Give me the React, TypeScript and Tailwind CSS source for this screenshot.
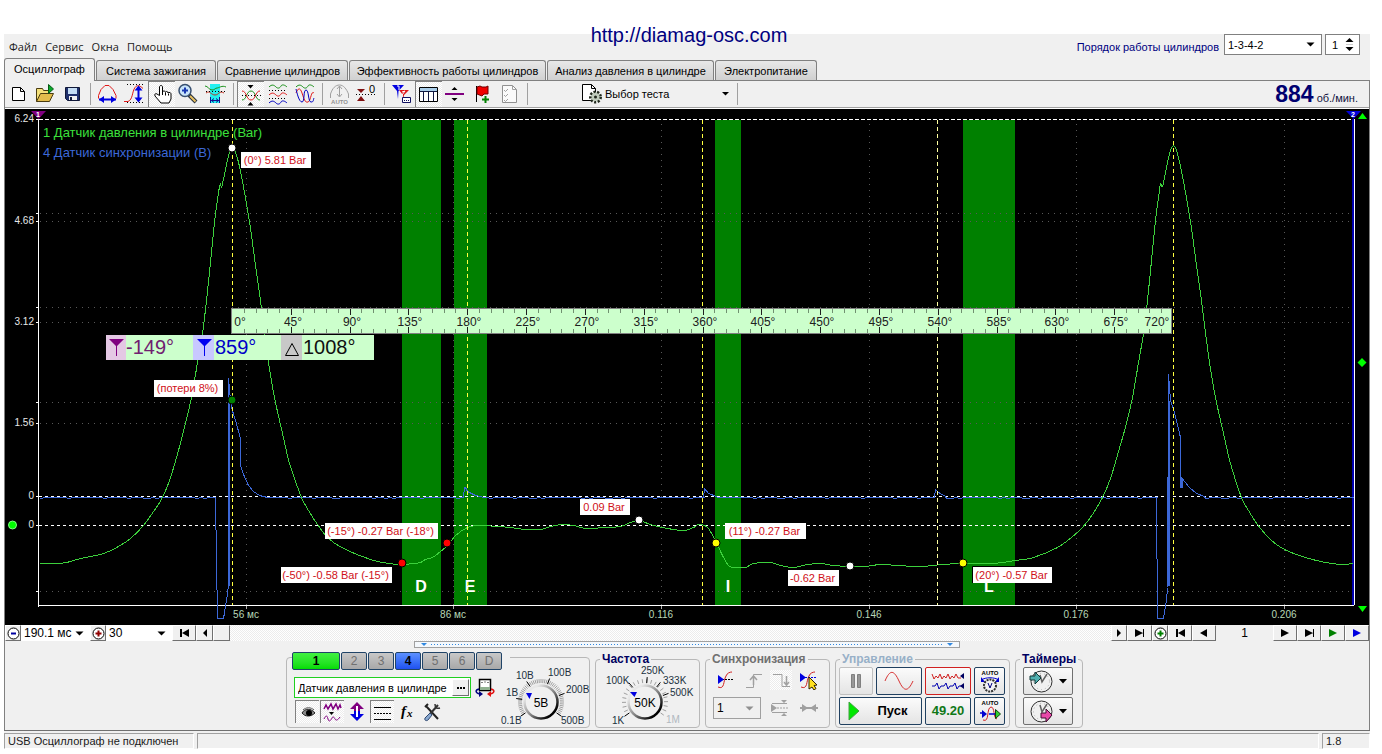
import React from "react";

type Kids = { children?: React.ReactNode };

const DITHER =
  "bg-[repeating-conic-gradient(#ffffff_0_25%,#ececec_0_50%)] bg-[length:2px_2px]";

/* ---------- small shared pieces ---------- */

function Icon({ w, h, children }: Kids & { w: number; h: number }) {
  return (
    <svg width={w} height={h} viewBox={`0 0 ${w} ${h}`} fill="none" className="block shrink-0" aria-hidden="true">
      {children}
    </svg>
  );
}

function Tool({ label, pressed, children }: Kids & { label: string; pressed?: boolean }) {
  return (
    <button
      aria-label={label}
      className={
        "h-[26px] w-[27px] shrink-0 " +
        (pressed ? "shadow-[inset_1px_1px_0_#808080] " + DITHER : "")
      }
    >
      <Icon w={27} h={26}>{children}</Icon>
    </button>
  );
}

function Sep() {
  return (
    <span className="flex h-[26px] w-2 shrink-0 items-center justify-center">
      <span className="h-[22px] w-px bg-[#a0a0a0]" />
    </span>
  );
}

function Combo({ label, value, box, arrow }: { label: string; value: string; box: string; arrow: string }) {
  return (
    <span className={"relative flex shrink-0 items-center " + box}>
      <select aria-label={label} defaultValue={value} className="h-full w-full appearance-none bg-transparent pl-[3px] text-[12px] leading-4 outline-none">
        <option>{value}</option>
      </select>
      <svg width="9" height="5" viewBox="0 0 9 5" className={"pointer-events-none absolute right-1.5 " + arrow} aria-hidden="true">
        <path d="M0.500 0.500H8.500L4.500 4.500Z" fill="currentColor" />
      </svg>
    </span>
  );
}

/* ---------- header ---------- */

function Header() {
  return (
    <header className="flex h-[25px] items-center justify-between bg-[#f0f0f0] pl-[5px] pr-[10px]">
      <nav className="flex gap-2 font-['Open_Sans','Liberation_Sans',sans-serif] text-[11px] leading-4 text-[#1a1a1a]">
        <button>Файл</button>
        <button>Сервис</button>
        <button>Окна</button>
        <button>Помощь</button>
      </nav>
      <div className="flex items-center gap-[3px]">
        <label htmlFor="order" className="mr-0.5 text-[11px] leading-4 text-[#000080]">Порядок работы цилиндров</label>
        <span className="relative -mt-1 flex h-[21px] w-[98px] items-center border border-[#808080] bg-white">
          <select id="order" defaultValue="1-3-4-2" className="h-full w-full appearance-none bg-transparent pl-[3px] text-[11px] leading-4 outline-none">
            <option>1-3-4-2</option>
          </select>
          <svg width="9" height="5" viewBox="0 0 9 5" className="pointer-events-none absolute right-1.5" aria-hidden="true">
            <path d="M0.500 0.500H8.500L4.500 4.500Z" fill="#000" />
          </svg>
        </span>
        <span className="-mt-1 flex h-[21px] w-[35px] items-center border border-[#808080] bg-white">
          <input aria-label="Цилиндр" defaultValue="1" className="w-[18px] bg-transparent pl-1.5 text-[11px] leading-4 outline-none" />
          <button aria-label="Изменить цилиндр">
            <Icon w={11} h={15}>
              <path d="M5.500 1L9.500 5H1.500ZM5.500 14L1.500 10H9.500Z" fill="#000" />
              <path d="M2 7.500H9" stroke="#ccc" />
            </Icon>
          </button>
        </span>
      </div>
    </header>
  );
}

const tabs = [
  { t: "Система зажигания", w: "w-[120px]" },
  { t: "Сравнение цилиндров", w: "w-[131px]" },
  { t: "Эффективность работы цилиндров", w: "w-[197px]" },
  { t: "Анализ давления в цилиндре", w: "w-[167px]" },
  { t: "Электропитание", w: "w-[102px]" },
];

function Tabs() {
  return (
    <div role="tablist" className="flex h-[21px] items-end gap-px bg-[#f0f0f0] text-[11px] leading-4">
      <button role="tab" aria-selected="true" className="-mb-px h-[23px] w-[91px] shrink-0 rounded-t-[3px] border border-b-0 border-[#808080] bg-[#f0f0f0] pb-0.5">
        Осциллограф
      </button>
      {tabs.map((x) => (
        <button
          key={x.t}
          role="tab"
          aria-selected="false"
          className={"h-5 shrink-0 whitespace-nowrap rounded-t-[3px] border border-b-0 border-[#808080] bg-linear-to-b from-[#e8e8e8] to-[#d0d0d0] " + x.w}
        >
          {x.t}
        </button>
      ))}
    </div>
  );
}

/* ---------- toolbar ---------- */

function Toolbar() {
  return (
    <div className="flex h-[29px] items-start border-t border-[#808080] bg-[#f0f0f0] shadow-[inset_0_-1px_0_#fff,inset_0_-2px_0_#a0a0a0]">
      <Tool label="Новый">
        <path d="M7.500 6.500h8l4 4v9h-12z M15.500 6.500v4h4" fill="#fff" stroke="#000" />
      </Tool>
      <Tool label="Открыть">
        <path d="M4.500 20.500v-13h6l1 2h6v3" fill="#f4e07a" stroke="#4a3c10" />
        <path d="M4.500 20.500l4-8h13l-4 8z" fill="#e2bc4c" stroke="#4a3c10" />
        <path d="M16.500 3.500v9l5-4.500z" fill="#0aa82c" stroke="#045a14" />
      </Tool>
      <Tool label="Сохранить">
        <path d="M6.500 6.500h14v13h-12l-2-2z" fill="#20306c" stroke="#101838" />
        <path d="M9 7h9v6H9z" fill="#c4dcf4" />
        <path d="M10 15h8v4h-8z" fill="#f0f0f0" />
        <path d="M11 16h2v3h-2z" fill="#101838" />
      </Tool>
      <Sep />
      <Tool label="Ширина">
        <path d="M4.500 17.500v-3L7 8.500 11 4.500h4L19 8.500l3 6v3" stroke="#e01818" />
        <path d="M5 18.500H22" stroke="#0000e0" strokeWidth="2" />
        <path d="M10 15v7l-5-3.500zM17 15v7l5-3.500z" fill="#0000e0" />
      </Tool>
      <Tool label="Высота">
        <path d="M6 3.500H22M6 21.500H22" stroke="#000" strokeDasharray="1 2" />
        <path d="M3 20.500h4c5-2 4-10 7-14 2-3 5-2 8 1" stroke="#e01818" />
        <path d="M17.500 7V19" stroke="#0000e0" strokeWidth="2" />
        <path d="M17.500 4.500l4 5h-8zM17.500 21.500l4-5h-8z" fill="#0000e0" />
      </Tool>
      <Tool label="Рука" pressed>
        <path d="M11.500 14.500V6c0-2 3-2 3 0v5.500c0-2 3-2 3 0 0-1.500 2.500-1.500 2.500.5 0-1 3-1 3 1v5l-2 4h-8l-6-7c-1-2 1-3 2-2z" fill="#fff" stroke="#000" />
        <path d="M14.500 11v3M17.500 12v2.500M20.500 12.500v2" stroke="#000" />
      </Tool>
      <Tool label="Масштаб">
        <path d="M14 14l7 7" stroke="#26303c" strokeWidth="4" />
        <path d="M15 15l5.500 5.500" stroke="#e8c060" strokeWidth="2" />
        <circle cx="10" cy="9.500" r="6" fill="#c8e4fa" stroke="#385070" strokeWidth="1.500" />
        <path d="M7 9.500h6M10 6.500v6" stroke="#1838b0" strokeWidth="2" />
      </Tool>
      <Tool label="Диапазон">
        <path d="M8 3h10v19H8z" fill="#20f0f0" />
        <path d="M3 5c3 0 4 4 7 4s3-2 5-2 5-3 9-1" stroke="#189018" />
        <path d="M4 12c4-3 5 2 9 2s4-5 9-2" stroke="#c03020" />
        <path d="M4 10.500h20" stroke="#000" strokeDasharray="1 2" />
        <path d="M8.500 16v6M17.500 16v6M9 19.500h8M12 17.500l-2.500 2 2.500 2M14 17.500l2.500 2-2.500 2" stroke="#101090" />
      </Tool>
      <Sep />
      <Tool label="Сигналы" pressed>
        <path d="M5 19c5 0 4-9 9-9s4 9 9 9" stroke="#189018" />
        <path d="M5 10c5 0 4 9 9 9s4-9 9-9" stroke="#e01818" />
        <path d="M5 14.500h19" stroke="#000" strokeDasharray="1 2" />
        <path d="M10.500 4h6l-3 3.500zM10.500 24.500h6l-3-3.500z" fill="#000" />
      </Tool>
      <Tool label="Раздельно">
        <path d="M5 6c3-3 5-2 7 0s4 1 5-1 4-1 6 1" stroke="#189018" />
        <path d="M5 14c3-3 5-2 7 0s4 1 5-1 4-1 6 1" stroke="#e01818" />
        <path d="M5 22c3-3 5-2 7 0s4 1 5-1 4-1 6 1" stroke="#0000c0" />
        <path d="M5 9.500h18M5 17.500h18" stroke="#000" strokeDasharray="1 2" />
      </Tool>
      <Tool label="Наложение">
        <path d="M5 6c3-3 5-2 7 0s4 1 5-1 4-1 6 1" stroke="#189018" />
        <path d="M5 12c2-5 4-6 6 0s3 10 6 9 3-12 6-9" stroke="#e01818" />
        <path d="M5 8c1 4 3 13 6 13s1-12 4-12 2 12 5 12 2-2 3-4" stroke="#0000c0" />
      </Tool>
      <Sep />
      <Tool label="Авто">
        <path d="M4.500 17v-4c2-6 5-9 9-9s7 4 9 9v4" stroke="#a0a0a0" />
        <path d="M13.500 5v10M11 8l2.500-3L16 8M11 13l2.500 3 2.500-3" stroke="#a0a0a0" />
        <text x="13.500" y="23" textAnchor="middle" fontSize="6" fontWeight="bold" fill="#909090">AUTO</text>
      </Tool>
      <Tool label="Ноль">
        <path d="M3 13.500h19" stroke="#000" strokeDasharray="1 2" />
        <path d="M4 8h8L8 12zM4 20h8l-4-5z" fill="#801010" />
        <text x="16" y="12" fontSize="11" fill="#000">0</text>
      </Tool>
      <Sep />
      <Tool label="Маркеры">
        <path d="M4 4h12l-5.500 6-.5 8-1-8z" fill="#0000e0" />
        <path d="M11 9h10l-5 5v8l-1-8z" fill="#e01818" />
        <path d="M9 5h2v4M14 11l3-1-3 4" stroke="#fff" />
        <path d="M14.500 16.500h8v5h-8z" fill="#fff" stroke="#101060" />
        <path d="M16 19.500h5" stroke="#101060" strokeDasharray="1 1" />
      </Tool>
      <Tool label="Таблица" pressed>
        <path d="M4.500 6.500h18v14h-18z" fill="#fff" stroke="#000" />
        <path d="M5 7h17v3H5z" fill="#a8cce8" />
        <path d="M5 10.500h17M8.500 10v10M13.500 10v10M18.500 10v10" stroke="#101840" />
      </Tool>
      <Tool label="Линия">
        <path d="M3 13h19" stroke="#800080" strokeWidth="2" />
        <path d="M9.500 9h6l-3-3zM9.500 17h6l-3 3z" fill="#000" />
      </Tool>
      <Tool label="Флаг">
        <path d="M7.500 5v16" stroke="#000" />
        <path d="M8 6l3-1 2 1h4l2-1v8h-4l-2 2-5-2z" fill="#f00000" stroke="#700000" />
        <path d="M16.500 15v7M13 18.500h7" stroke="#008000" strokeWidth="2" />
      </Tool>
      <Tool label="Отчёт">
        <path d="M6.500 4.500h10l4 4v13h-14z" fill="#fafafa" stroke="#909090" />
        <path d="M16.500 4.500v4h4M8 9l1.500 1.500L12 8M8 14l1.500 1.500L12 13M8 19l1.500 1.500L12 18" stroke="#a0a0a0" />
      </Tool>
      <Sep />
      <button className="ml-[50px] flex h-[26px] w-[152px] shrink-0 items-center gap-0.5 text-[11px] leading-4">
        <Icon w={22} h={22}>
          <path d="M1.500 1.500h9l4 4v12h-13z" fill="#fff" stroke="#000" />
          <path d="M10.500 1.500v4h4" stroke="#000" />
          <circle cx="14.500" cy="14" r="5" fill="#d0dccc" stroke="#20281c" strokeWidth="3" strokeDasharray="2 1.500" />
          <circle cx="14.500" cy="14" r="4" fill="#c0ccbc" />
          <circle cx="14.500" cy="14" r="1.500" fill="#20281c" />
        </Icon>
        <span className="grow text-left">Выбор теста</span>
        <Icon w={13} h={6}><path d="M2 1h7L5.500 4.500z" fill="#000" /></Icon>
      </button>
      <Sep />
      <p className="ml-auto flex items-baseline gap-[3px] pr-[11px]">
        <strong className="text-[23px] leading-[26px] text-[#000070]">884</strong>
        <span className="text-[11px] leading-4 text-[#101040]">об./мин.</span>
      </p>
    </div>
  );
}

/* ---------- oscillogram ---------- */

const pressure =
  "39,563 55,563 66,562 80,558 103,553 118,546 130,538 143,525 153,511 162,497 170,477 178,450 185,423 191,397 194,380 197,362 202,333 206,300 210,262 214,222 218,192 220,183 221,187 226,164 229,152 232,148 235,152 239,166 244,192 250,228 255,265 260,300 264,332 268,362 274,397 282,433 289,463 301,497 308,510 317,524 328,538 343,548 370,559 388,563 402,564 413,563 420,562 425,559 432,557 440,551 447,545 455,535 467,527 477,525 497,526 510,527 525,529 540,529 550,526 562,524 573,525 585,528 593,528 603,527 620,526 630,522 638,520 650,524 662,527 683,530 693,527 698,524 704,525 708,528 716,542 722,555 728,565 733,567 745,567 753,563 770,562 780,565 793,567 807,564 820,563 833,565 850,566 864,566 880,564 897,565 921,566 942,564 963,563 992,563 1015,560 1033,557 1057,547 1071,537 1082,527 1092,514 1102,497 1110,478 1118,451 1126,423 1132,397 1135,380 1138,362 1143,333 1147,300 1151,260 1155,220 1159,190 1160,183 1162,186 1167,162 1170,150 1173,145 1176,150 1180,166 1185,192 1191,228 1196,265 1201,300 1205,332 1209,362 1215,397 1223,433 1230,463 1241,497 1248,510 1257,524 1271,540 1284,549 1305,557 1325,562 1342,564 1353,563";

/* Catmull-Rom spline through the sampled points */
function smooth(points: string) {
  const p = points.split(" ").map((s) => s.split(",").map(Number));
  const r = (n: number) => Math.round(n * 10) / 10;
  let d = `M${p[0][0]} ${p[0][1]}`;
  for (let i = 0; i < p.length - 1; i++) {
    const a = p[Math.max(0, i - 1)];
    const b = p[i];
    const c = p[i + 1];
    const e = p[Math.min(p.length - 1, i + 2)];
    const dx = (c[0] - b[0]) / 3;
    const mb = (c[1] - a[1]) / (c[0] - a[0]);
    const mc = (e[1] - b[1]) / (e[0] - b[0]);
    d += `C${r(b[0] + dx)} ${r(b[1] + mb * dx)} ${r(c[0] - dx)} ${r(c[1] - mc * dx)} ${c[0]} ${c[1]}`;
  }
  return d;
}

const pressurePath = smooth(pressure);

function noise(x0: number, x1: number) {
  const out: string[] = [];
  let seed = x0;
  for (let x = x0; x < x1; x += 4) {
    seed = (seed * 73 + 41) % 101;
    const y = seed % 5 === 0 ? 498 : 497;
    out.push(`${x},${y}`, `${x + 3},${y}`);
  }
  return out.join(" ");
}

const sync = [
  noise(39, 214),
  "215,497 216,560 217,618 223,618 226,600 228,585 228,378 230,400 231,407 235,420 240,438 240,465 243,474 248,485 253,491 259,495 267,497",
  noise(268, 462),
  "463,497 464,487 465,487 467,491 475,495 484,497",
  noise(485, 702),
  "703,497 704,488 708,493 716,496",
  noise(717, 933),
  "934,497 935,489 938,492 945,496",
  noise(946, 1155),
  "1156,497 1157,618 1163,618 1166,600 1167,587 1168,374 1170,400 1174,412 1180,437 1180,487 1181,477 1184,481 1189,487 1196,493 1204,496",
  noise(1205, 1350),
  "1353,497",
].join(" ");

const tags = [
  { t: "(0°) 5.81 Bar", x: 241, y: 152, w: 70 },
  { t: "(потери 8%)", x: 154, y: 380, w: 69 },
  { t: "(-15°) -0.27 Bar (-18°)", x: 325, y: 523, w: 113 },
  { t: "(-50°) -0.58 Bar (-15°)", x: 281, y: 567, w: 111 },
  { t: "0.09 Bar", x: 580, y: 499, w: 50 },
  { t: "(11°) -0.27 Bar", x: 725, y: 523, w: 81 },
  { t: "-0.62 Bar", x: 788, y: 570, w: 51 },
  { t: "(20°) -0.57 Bar", x: 973, y: 567, w: 79 },
];

const dots = [
  [232, 148, "#ffffff"], [232, 400, "#008000"], [402, 563, "#ff0000"], [447, 543, "#ff0000"],
  [639, 520, "#ffffff"], [716, 543, "#ffff00"], [850, 566, "#ffffff"], [963, 563, "#ffff00"],
] as const;

const leftScale = [
  [119, "6.24"], [221, "4.68"], [322, "3.12"], [423, "1.56"], [496, "0"], [525, "0"],
] as const;

const timeScale = [
  [246, "56 мс"], [453, "86 мс"], [661, "0.116"], [869, "0.146"], [1076, "0.176"], [1284, "0.206"],
] as const;

const bands = [
  [402, 39, 421, "D"], [454, 33, 470, "E"], [715, 26, 728, "I"], [963, 52, 989, "L"],
] as const;

function Ruler() {
  const step = 941 / 80;
  const ticks: number[] = [];
  for (let i = 1; i <= 79; i++) ticks.push(i);
  return (
    <g>
      <rect x="231.500" y="308.500" width="940" height="25" fill="#ccffcc" stroke="#808080" />
      {ticks.map((i) => {
        const x = Math.round(232 + i * step) + 0.5;
        const l = i % 5 === 0 ? 6 : 4;
        return <path key={i} d={`M${x} 309v${l}M${x} 333v${-l}`} stroke={i % 5 ? "#709070" : "#202020"} />;
      })}
      <g fontSize="12" fill="#202020" textAnchor="middle">
        <text x="240" y="326">0°</text>
        {[45, 90, 135, 180, 225, 270, 315, 360, 405, 450, 495, 540, 585, 630, 675].map((d) => (
          <text key={d} x={Math.round(234 + (d * 941) / 720)} y="326">{d}°</text>
        ))}
        <text x="1157" y="326">720°</text>
      </g>
    </g>
  );
}

function Chart() {
  return (
    <svg viewBox="5 109 1364 516" className="block w-full bg-black font-['Liberation_Sans',sans-serif]" role="img" aria-label="Осциллограмма">
      <rect x="5" y="109" width="1364" height="516" fill="#000" />
      <g shapeRendering="crispEdges">
        {bands.map((b) => <rect key={b[0]} x={b[0]} y="120" width={b[1]} height="485" fill="#008000" />)}
        <g stroke="#585858" strokeDasharray="1 5">
          {[213, 221, 307, 322, 402, 423, 591].map((y) => <path key={y} d={`M40 ${y}.5H1353`} />)}
          {timeScale.map((t) => <path key={t[0]} d={`M${t[0]}.5 124V605`} />)}
        </g>
        <path d="M39 119.500H1353" stroke="#fff" strokeDasharray="4 2" />
        <path d="M39 496.500H1353M39 525.500H1353" stroke="#fff" strokeDasharray="3 3" />
        <path d="M38.500 119V607M38 605.500H1354" stroke="#fff" />
        {[119, 213, 221, 307, 322, 402, 423, 496, 525, 591].map((y) => <path key={y} d={`M36 ${y}.5h3`} stroke="#fff" />)}
        {timeScale.map((t) => <path key={t[0]} d={`M${t[0]}.5 606v3`} stroke="#aaa" />)}
        <path d="M1353 119V605" stroke="#0000b0" strokeWidth="2" />
        <path d="M1354.500 119V605" stroke="#fff" />
      </g>

      <g fontSize="16" fontWeight="bold" fill="#fff" textAnchor="middle">
        {bands.map((b) => <text key={b[3]} x={b[2]} y="592">{b[3]}</text>)}
      </g>

      <g strokeWidth="1" shapeRendering="crispEdges" transform="translate(0.5 0.5)">
        <polyline points={sync} fill="none" stroke="#3c68d8" />
        <path d="M228 400V585M1168 400V585M1181 477V487" stroke="#3c68d8" strokeWidth="2" fill="none" />
        <path d={pressurePath} fill="none" stroke="#3cd03c" />
      </g>
      <path d="M232.500 120V605M467.500 120V605M702.500 120V605M1173.500 120V605" stroke="#ffff40" strokeDasharray="4 3" shapeRendering="crispEdges" />
      <path d="M937.500 120V605" stroke="#ffffa0" strokeDasharray="4 3" shapeRendering="crispEdges" />

      <g fontSize="10" fill="#e8e8e8" textAnchor="end">
        {leftScale.map((s) => <text key={s[0]} x="34" y={s[0] + 3}>{s[1]}</text>)}
      </g>
      <g fontSize="10" fill="#b8d8b8" textAnchor="middle">
        {timeScale.map((t) => <text key={t[0]} x={t[0]} y="618">{t[1]}</text>)}
      </g>
      <g fontSize="13">
        <text x="43" y="137" fill="#3ce03c">1 Датчик давления в цилиндре (Bar)</text>
        <text x="43" y="157" fill="#3c68d8">4 Датчик синхронизации (В)</text>
      </g>

      <Ruler />

      <g shapeRendering="crispEdges">
        <path d="M106 335h268v25H106z" fill="#ccffcc" />
        <path d="M106 335h20v25h-20z" fill="#e4c8e4" />
        <path d="M193 335h21v25h-21z" fill="#c8c8ff" />
        <path d="M281 335h21v25h-21z" fill="#c8c8c8" />
      </g>
      <path d="M109 339h15l-7 7v10h-1v-10z" fill="#800080" />
      <path d="M197 339h15l-7 7v10h-1v-10z" fill="#0000f0" />
      <path d="M285.500 355.500l6.500-12 6.500 12z" fill="none" stroke="#000" />
      <g fontSize="20">
        <text x="126" y="354" fill="#702070">-149°</text>
        <text x="215" y="354" fill="#0000c8">859°</text>
        <text x="303" y="354" fill="#101010">1008°</text>
      </g>

      {tags.map((t) => (
        <g key={t.t}>
          <rect x={t.x} y={t.y} width={t.w} height={t.t === "(потери 8%)" ? 17 : 16} fill="#fff" />
          <text x={t.x + t.w / 2 - 1} y={t.y + 12} fontSize="11" fill="#d01018" textAnchor="middle">{t.t}</text>
        </g>
      ))}
      <path d="M972.500 583V566.500H1015" fill="none" stroke="#000" />
      {dots.map((d) => <circle key={`${d[0]}-${d[1]}`} cx={d[0]} cy={d[1]} r="4" fill={d[2]} stroke="#000" strokeWidth="1" />)}

      <path d="M31 111h15l-7.500 8z" fill="#800080" />
      <path d="M1346 111h15l-7.500 8z" fill="#0000d8" />
      <g fontSize="7" fontWeight="bold" fill="#fff" textAnchor="middle">
        <text x="38" y="117">1</text>
        <text x="1353" y="117">2</text>
      </g>
      <path d="M1358 119h9l-4.500-6zM1358 606h9l-4.500 6zM1362 358l4.500 4.500-4.500 4.500-4.500-4.500z" fill="#00ff00" />
      <circle cx="12.500" cy="525" r="4" fill="#00ff00" stroke="#80ff80" />
    </svg>
  );
}

/* ---------- navigation strip ---------- */

function Nav({ label, w, children }: Kids & { label: string; w: string }) {
  return (
    <button
      aria-label={label}
      className={"flex h-4 shrink-0 items-center justify-center border border-[#fff] border-b-[#707070] border-r-[#707070] bg-[#f0f0f0] " + w}
    >
      {children}
    </button>
  );
}

const toStart = <Icon w={11} h={8}><path d="M1 0h2v8H1zM10 0v8L3 4z" fill="#000" /></Icon>;
const toEnd = <Icon w={11} h={8}><path d="M9 0h1v8H9zM1 0v8l8-4z" fill="#000" /></Icon>;

function NavStrip() {
  return (
    <div className={"flex h-4 text-[12px] leading-4 " + DITHER}>
      <Nav label="Уменьшить" w="w-4">
        <Icon w={13} h={13}><circle cx="6.500" cy="6.500" r="5.500" fill="#fff" stroke="#000" /><path d="M4 6.500h5" stroke="#0000a0" strokeWidth="2" /></Icon>
      </Nav>
      <Combo label="Время" value="190.1 мс" box="h-4 w-[69px] bg-white" arrow="text-black" />
      <Nav label="Увеличить" w="w-4">
        <Icon w={13} h={13}><circle cx="6.500" cy="6.500" r="5.500" fill="#fff" stroke="#000" /><path d="M3.500 6.500h6M6.500 3.500v6" stroke="#900000" strokeWidth="2" /></Icon>
      </Nav>
      <Combo label="Кадры" value="30" box="h-4 w-[66px] bg-white" arrow="text-black" />
      <Nav label="В начало" w="w-6">{toStart}</Nav>
      <Nav label="Назад" w="w-[17px]"><Icon w={6} h={8}><path d="M5 0v8L1 4z" fill="#000" /></Icon></Nav>
      <Nav label="Ползунок" w="w-[17px]" />
      <span className="grow" />
      <Nav label="Вперёд" w="w-4"><Icon w={6} h={8}><path d="M1 0v8l4-4z" fill="#000" /></Icon></Nav>
      <Nav label="В конец" w="w-[25px]">{toEnd}</Nav>
      <Nav label="Добавить" w="w-4">
        <Icon w={13} h={13}><circle cx="6.500" cy="6.500" r="5.500" fill="#fff" stroke="#000" /><path d="M3.500 6.500h6M6.500 3.500v6" stroke="#008000" strokeWidth="2" /></Icon>
      </Nav>
      <Nav label="Первый кадр" w="w-6">{toStart}</Nav>
      <Nav label="Предыдущий кадр" w="w-6"><Icon w={8} h={8}><path d="M7 0v8L0 4z" fill="#000" /></Icon></Nav>
      <span className="w-[57px] shrink-0 bg-[#f0f0f0] text-center">1</span>
      <Nav label="Следующий кадр" w="w-6"><Icon w={8} h={8}><path d="M0 0v8l8-4z" fill="#000" /></Icon></Nav>
      <Nav label="Последний кадр" w="w-6">{toEnd}</Nav>
      <Nav label="Воспроизвести" w="w-6"><Icon w={8} h={8}><path d="M0 0v8l8-4z" fill="#008000" /></Icon></Nav>
      <Nav label="Воспроизвести далее" w="w-6"><Icon w={8} h={8}><path d="M0 0v8l8-4z" fill="#0000e0" /></Icon></Nav>
    </div>
  );
}

/* ---------- bottom panel ---------- */

function arc(cx: number, cy: number, r1: number, r2: number, deg: number) {
  const a = (deg * Math.PI) / 180;
  const f = (n: number) => Math.round(n * 10) / 10;
  return `M${f(cx + r1 * Math.cos(a))} ${f(cy - r1 * Math.sin(a))}L${f(cx + r2 * Math.cos(a))} ${f(cy - r2 * Math.sin(a))}`;
}

function Dial({ cx, cy, minor, major, pointer, value }: { cx: number; cy: number; minor: number; major: number[]; pointer: string; value: string }) {
  const list: number[] = [];
  for (let d = -35; d <= 216; d += minor) list.push(d);
  return (
    <g fill="none">
      <defs>
        <linearGradient id={`rim${cx}`} x1="0" y1="0" x2="1" y2="1">
          <stop offset="0.2" stopColor="#e8e8e8" />
          <stop offset="0.55" stopColor="#808080" />
          <stop offset="0.85" stopColor="#000000" />
        </linearGradient>
      </defs>
      {list.map((d) => <path key={d} d={arc(cx, cy, 19, 23, d)} stroke="#a0a0a0" />)}
      {major.map((d) => <path key={d} d={arc(cx, cy, 19, 25, d)} stroke="#000" />)}
      <circle cx={cx} cy={cy} r="16.500" fill="#f0f0f0" stroke={`url(#rim${cx})`} strokeWidth="2.500" />
      <path d={pointer} fill="#0000e0" />
      <text x={cx} y={cy + 5} fontSize="12" textAnchor="middle" fill="#000">{value}</text>
    </g>
  );
}

const channels = [
  { n: "1", c: "w-[48px] from-[#40f040] to-[#00dc00] text-black font-bold" },
  { n: "2", c: "w-[26px] from-[#c8c8c8] to-[#a8a8a8] text-[#707070]" },
  { n: "3", c: "w-[26px] from-[#c8c8c8] to-[#a8a8a8] text-[#707070]" },
  { n: "4", c: "w-[26px] from-[#5c90ff] to-[#2050f0] text-black font-bold" },
  { n: "5", c: "w-[26px] from-[#c8c8c8] to-[#a8a8a8] text-[#707070]" },
  { n: "6", c: "w-[26px] from-[#c8c8c8] to-[#a8a8a8] text-[#707070]" },
  { n: "D", c: "w-[26px] from-[#c8c8c8] to-[#a8a8a8] text-[#707070]" },
];

function Toggle({ label, on, children }: Kids & { label: string; on?: boolean }) {
  return (
    <button aria-label={label} className={"h-[23px] w-6 shrink-0 " + (on ? "shadow-[inset_1px_1px_0_#808080] " + DITHER : "")}>
      <Icon w={24} h={23}>{children}</Icon>
    </button>
  );
}

function ChannelBox() {
  return (
    <section className="mt-[5px] flex w-[304px] shrink-0 rounded-[4px] border border-[#b8b8b8]">
      <div className="w-[214px] shrink-0 pl-[5px]">
        <div className="-mt-[6px] flex w-[218px] gap-px bg-[#f0f0f0]">
          {channels.map((c) => (
            <button key={c.n} className={"h-[18px] rounded-[2px] border border-[#204468] bg-linear-to-b text-[12px] leading-4 " + c.c}>
              {c.n}
            </button>
          ))}
        </div>
        <div className="mt-[7px] flex items-center gap-1 pl-0.5">
          <span className="flex h-[21px] w-[177px] shrink-0 items-center border border-[#20d020] bg-white pr-px">
            <input aria-label="Датчик" defaultValue="Датчик давления в цилиндре" className="w-[157px] bg-transparent pl-[3px] text-[11px] leading-4 outline-none" />
            <button aria-label="Выбрать датчик" className="flex h-[17px] w-[17px] items-center justify-center border border-[#fff] border-b-[#707070] border-r-[#707070] bg-[#f0f0f0]">
              <Icon w={8} h={2}><path d="M0 1h2M3 1h2M6 1h2" stroke="#000" strokeWidth="2" /></Icon>
            </button>
          </span>
          <button aria-label="Сменить">
            <Icon w={20} h={20}>
              <path d="M4.500 1.500h11v11h-11z" fill="#fff" stroke="#000" strokeWidth="1.500" />
              <path d="M5 9h10v3H5z" fill="#90b090" />
              <path d="M7 4v1M10 3.500v1M13 4v1" stroke="#000" />
              <path d="M4 11c-4 1-4 4 1 5" stroke="#000080" strokeWidth="1.500" />
              <path d="M4 13l4 3-4 3z" fill="#000080" />
              <path d="M16 11c4 1 4 4-1 5" stroke="#e01010" strokeWidth="1.500" />
              <path d="M16 13l-4 3 4 3z" fill="#e01010" />
            </Icon>
          </button>
        </div>
        <div className="mt-[2px] flex gap-px pl-[3px]">
          <Toggle label="Показать" on>
            <path d="M7 13c3-5 9-5 13 0-4 4-10 4-13 0z" fill="#888" stroke="#222" />
            <circle cx="14" cy="13" r="3" fill="#000" />
            <path d="M8 10c3-3 8-3 11 0" stroke="#555" />
          </Toggle>
          <Toggle label="Фильтр" on>
            <path d="M4 9l2-4 2 4 3-5 2 5 3-5 2 5 2-4 1 3" stroke="#800080" strokeWidth="1.500" />
            <path d="M9 12h5l-2.500 3z" fill="#000" />
            <path d="M4 19c2-4 3-4 4 0s3 1 4-1 2-1 3 1 3 1 5-2" stroke="#800080" />
          </Toggle>
          <Toggle label="Смещение">
            <path d="M12 2l7 7h-4v3H9V9H5z" fill="#800080" />
            <path d="M12 21l-7-7h4v-3h6v3h4z" fill="#0000e0" />
            <path d="M12 6v11" stroke="#fff" strokeWidth="2" />
          </Toggle>
          <Toggle label="Уровни" on>
            <path d="M4 7.500h17M4 19.500h17" stroke="#000" />
            <path d="M4 13.500h17" stroke="#000" strokeDasharray="2 1" />
          </Toggle>
          <Toggle label="Функция">
            <text x="6" y="16" fontSize="15" fontStyle="italic" fontWeight="bold" fill="#000" className="font-['Liberation_Serif',serif]">f</text>
            <text x="12" y="17" fontSize="11" fontStyle="italic" fontWeight="bold" fill="#000" className="font-['Liberation_Serif',serif]">x</text>
          </Toggle>
          <Toggle label="Настройки">
            <path d="M6 6l12 13M8 4l-3 3" stroke="#222" strokeWidth="2" />
            <path d="M18 5l-8 9" stroke="#333" strokeWidth="2" />
            <path d="M15 4c0 4 2 5 5 4" stroke="#333" strokeWidth="1.500" />
            <path d="M10 13l-5 5c-1 3 2 3 3 2l4-5z" fill="#88a8d0" stroke="#304870" />
          </Toggle>
        </div>
      </div>
      <svg width="88" height="66" viewBox="501 662 88 66" className="block shrink-0 overflow-visible font-['Liberation_Sans',sans-serif]" role="img" aria-label="Диапазон">
        <Dial cx={541} cy={706} minor={5} major={[-35, 20, 70, 125, 172, 215]} pointer="M526 697h6l-2.500 6z" value="5В" />
        <g fontSize="10" fill="#203040">
          <text x="516" y="683">10В</text>
          <text x="548" y="680">100В</text>
          <text x="506" y="700">1В</text>
          <text x="566" y="697">200В</text>
          <text x="501" y="728">0.1В</text>
          <text x="561" y="728">500В</text>
        </g>
      </svg>
    </section>
  );
}

function Group({ title, w, tone, children }: Kids & { title: string; w: string; tone: string }) {
  return (
    <fieldset className={"min-w-0 shrink-0 rounded-[4px] border border-[#b8b8b8] " + w}>
      <legend className={"ml-1 px-0.5 text-[12px] font-bold leading-[14px] " + tone}>{title}</legend>
      {children}
    </fieldset>
  );
}

function Btn({ label, tone, w, children }: Kids & { label?: string; tone: string; w: string }) {
  return (
    <button
      aria-label={label}
      className={"flex h-7 shrink-0 items-center justify-center rounded-[2px] border bg-linear-to-b from-[#fbfbfb] to-[#e4e4e4] " + tone + " " + w}
    >
      {children}
    </button>
  );
}

function Clock({ out }: { out?: boolean }) {
  return (
    <Icon w={24} h={24}>
      <circle cx="12.500" cy="12.500" r="10.500" fill="#f0f0f0" stroke="#303030" />
      <circle cx="12.500" cy="12.500" r="8" stroke="#b0b0b0" strokeDasharray="1 3" />
      <path d="M11 6l2 7 5-8" stroke="#606060" strokeWidth="1.500" />
      {out ? (
        <path d="M12 14h5v-4l6 6-6 7v-4h-5z" fill="#e848a8" stroke="#401030" />
      ) : (
        <path d="M1 7h5V3l6 6-6 6v-4H1z" fill="#50b0b0" stroke="#103838" />
      )}
    </Icon>
  );
}

function BottomPanel() {
  return (
    <div className="flex h-[82px] items-stretch justify-center gap-[5px] bg-[#f0f0f0] pb-[2px] pr-[5px] pt-1">
      <ChannelBox />

      <Group title="Частота" w="w-[105px]" tone="text-[#000060]">
        <svg width="103" height="62" viewBox="595 667 103 62" className="block overflow-visible font-['Liberation_Sans',sans-serif]" role="img" aria-label="Частота">
          <Dial cx={644} cy={703} minor={12} major={[20, 52, 85, 130, 215]} pointer="M629 693h7l-2.500 5z" value="50K" />
          <g fontSize="10" fill="#203040">
            <text x="605" y="685">100K</text>
            <text x="640" y="675">250K</text>
            <text x="662" y="685">333K</text>
            <text x="669" y="697">500K</text>
            <text x="611" y="725">1K</text>
            <text x="665" y="724" fill="#b0b8c0">1M</text>
          </g>
        </svg>
      </Group>

      <Group title="Синхронизация" w="w-[125px]" tone="text-[#707070]">
        <div className="grid grid-cols-4 place-items-center px-1.5 pt-1">
          <button aria-label="Уровень">
            <Icon w={22} h={20}>
              <path d="M3 17c7 3 5-6 8-11 1-3 4-4 6-4" stroke="#d02020" />
              <path d="M4 9.500h15" stroke="#000" strokeDasharray="2 1" />
              <path d="M3 5l6 4.500L3 14z" fill="#0000e0" />
            </Icon>
          </button>
          <button aria-label="Фронт">
            <Icon w={22} h={20}><path d="M3 17.500h7.500v-13H19" stroke="#a0a0a0" /><path d="M7 10l3.500-4L14 10M10.500 6v9" stroke="#a0a0a0" strokeWidth="1.500" /></Icon>
          </button>
          <button aria-label="Спад" className={DITHER}>
            <Icon w={22} h={20}><path d="M3 4.500h9v12H20" stroke="#a0a0a0" /><path d="M16.500 6v8M14 12l2.500 3 2.500-3" stroke="#a0a0a0" strokeWidth="1.500" /></Icon>
          </button>
          <button aria-label="Указать уровень">
            <Icon w={22} h={20}>
              <path d="M3 17c7 3 5-6 8-11 1-3 4-4 6-4" stroke="#d02020" />
              <path d="M4 7.500h15" stroke="#0000e0" strokeDasharray="2 1" />
              <path d="M2 3l6 4.500L2 12z" fill="#0000e0" />
              <path d="M11 7l8 8-3 .5 2 3-2 1.500-2-3-3 2z" fill="#ffe020" stroke="#302000" />
            </Icon>
          </button>
        </div>
        <div className="flex items-center gap-2 pl-[7px] pt-[7px]">
          <Combo label="Канал" value="1" box="h-[22px] w-12 border border-[#a0a0a0] text-black" arrow="text-[#909090]" />
          <button aria-label="Растянуть">
            <Icon w={22} h={18}><path d="M3 4.500h15M3 13.500h15" stroke="#a0a0a0" /><path d="M8 9h12" stroke="#a0a0a0" strokeDasharray="2 1" /><path d="M2 5l6 4-6 4zM12 1h6l-3 3zM12 17h6l-3-3z" fill="#a0a0a0" /></Icon>
          </button>
          <button aria-label="Сжать">
            <Icon w={20} h={14}><path d="M1 7h18" stroke="#a0a0a0" strokeWidth="2" /><path d="M3 3l6 4-6 4zM17 3l-6 4 6 4z" fill="#a0a0a0" /></Icon>
          </button>
        </div>
      </Group>

      <Group title="Управление" w="w-[175px]" tone="text-[#98b0c8]">
        <div className="grid grid-cols-[34px_46px_46px_31px] gap-x-[3px] gap-y-[2px] pl-[3px] pt-px">
          <Btn label="Пауза" tone="border-[#c0c0c0]" w="w-[34px]">
            <Icon w={12} h={16}><path d="M1.500 1.500h3v13h-3zM7.500 1.500h3v13h-3z" fill="#989898" stroke="#808080" /></Icon>
          </Btn>
          <Btn label="Генератор" tone="border-[#204060]" w="w-[46px]">
            <Icon w={30} h={20}><path d="M1 10C6-2 10-1 15 10s9 11 14 0" stroke="#d83030" /></Icon>
          </Btn>
          <Btn label="Каналы" tone="border-[#d02020]" w="w-[46px]">
            <Icon w={34} h={20}>
              <path d="M1 3l2 5 2-3 2 2 2-4 2 5 2-3 2 2 2-4 2 5 2-3 2 2 2-4 2 4h3" stroke="#d02020" />
              <path d="M1 15h3l2-3 2 6 2-3h3l2-3 2 6 2-3h3l2-3 2 6 2-3h3" stroke="#0000b0" />
              <path d="M33 2v6l-4-3zM33 12v6l-4-3z" fill="#000060" />
            </Icon>
          </Btn>
          <Btn label="Авто напряжение" tone="border-[#204060]" w="w-[31px]">
            <Icon w={26} h={26}>
              <text x="13" y="7" fontSize="6" fontWeight="bold" textAnchor="middle" fill="#000">AUTO</text>
              <path d="M4 12c5-3 13-3 18 0" stroke="#0000d0" />
              <path d="M4 9v5h4zM22 9v5h-4z" fill="#0000d0" />
              <circle cx="13" cy="17.500" r="6" fill="#f4f4f4" stroke="#303030" strokeWidth="2" strokeDasharray="2 1" />
              <path d="M11 15l2 5 2-5" stroke="#000080" />
            </Icon>
          </Btn>
          <button className="col-span-2 flex h-7 items-center rounded-[2px] border border-[#204060] bg-linear-to-b from-[#fbfbfb] to-[#e4e4e4] pl-2 text-[13px] font-bold leading-4">
            <Icon w={12} h={20}><path d="M1 1v18l10-9z" fill="#00e800" stroke="#40a040" /></Icon>
            <span className="grow pl-1 text-center">Пуск</span>
          </button>
          <Btn tone="border-[#204060] text-[#107818]" w="w-[46px]">
            <span className="text-[13px] font-bold leading-4">49.20</span>
          </Btn>
          <Btn label="Авто синхронизация" tone="border-[#204060]" w="w-[31px]">
            <Icon w={26} h={26}>
              <text x="13" y="7" fontSize="6" fontWeight="bold" textAnchor="middle" fill="#000">AUTO</text>
              <path d="M6 22c7 3 3-12 8-13 4 0 2 11 6 12" stroke="#d02020" />
              <path d="M3 15h4M12 16h6" stroke="#0000d0" strokeWidth="1.500" />
              <path d="M5 12l5 4-5 4z" fill="#0000d0" />
              <path d="M18.500 11.500v9l5-4.500z" fill="#30d030" stroke="#104010" />
            </Icon>
          </Btn>
        </div>
      </Group>

      <Group title="Таймеры" w="w-[68px]" tone="text-[#000060]">
        <div className="flex flex-col gap-[2px] pl-[7px] pt-px">
          <Btn label="Таймер запуска" tone="gap-1.5 border-[#707070]" w="w-[50px]">
            <Clock />
            <Icon w={8} h={5}><path d="M0 0h8L4 4.500z" fill="#000" /></Icon>
          </Btn>
          <Btn label="Таймер остановки" tone="gap-1.5 border-[#707070]" w="w-[50px]">
            <Clock out />
            <Icon w={8} h={5}><path d="M0 0h8L4 4.500z" fill="#000" /></Icon>
          </Btn>
        </div>
      </Group>
    </div>
  );
}

function Splitter() {
  return (
    <div className="flex h-[7px] justify-center bg-[#f0f0f0]">
      <button aria-label="Свернуть панель" className="flex w-[546px] items-center justify-between border border-[#a0a0a0] bg-[#f4f8fc] px-1.5">
        <Icon w={6} h={3}><path d="M0 0h6L3 3z" fill="#3088e0" /></Icon>
        <span className="mx-1 h-px grow bg-[repeating-linear-gradient(90deg,#3088e0_0_1px,transparent_1px_3px)]" />
        <Icon w={6} h={3}><path d="M0 0h6L3 3z" fill="#3088e0" /></Icon>
      </button>
    </div>
  );
}

export default function App() {
  return (
    <div className="relative bg-white pl-1 pr-3 pt-[34px] font-['Liberation_Sans',sans-serif] text-[12px] leading-4 text-black">
      <p className="pointer-events-none absolute left-1 right-2 top-[23px] text-center text-[20px] leading-6 text-[#000080]">
        <a href="http://diamag-osc.com" className="pointer-events-auto">http://diamag-osc.com</a>
      </p>
      <Header />
      <main>
        <Tabs />
        <div className="border-x border-[#808080]">
          <Toolbar />
          <Chart />
          <NavStrip />
          <Splitter />
          <BottomPanel />
        </div>
      </main>
      <footer className="flex gap-[3px] border-t border-[#707070] bg-[#f0f0f0] pt-[2px] text-[11px] leading-[14px] text-[#202020]">
        <span className="w-[190px] shrink-0 border border-[#a0a0a0] border-b-white border-r-white pl-[3px]">USB Осциллограф не подключен</span>
        <span className="grow border border-[#a0a0a0] border-b-white border-r-white" />
        <span className="w-[48px] shrink-0 border border-[#a0a0a0] border-b-white border-r-white pl-[3px]">1.8</span>
      </footer>
    </div>
  );
}
